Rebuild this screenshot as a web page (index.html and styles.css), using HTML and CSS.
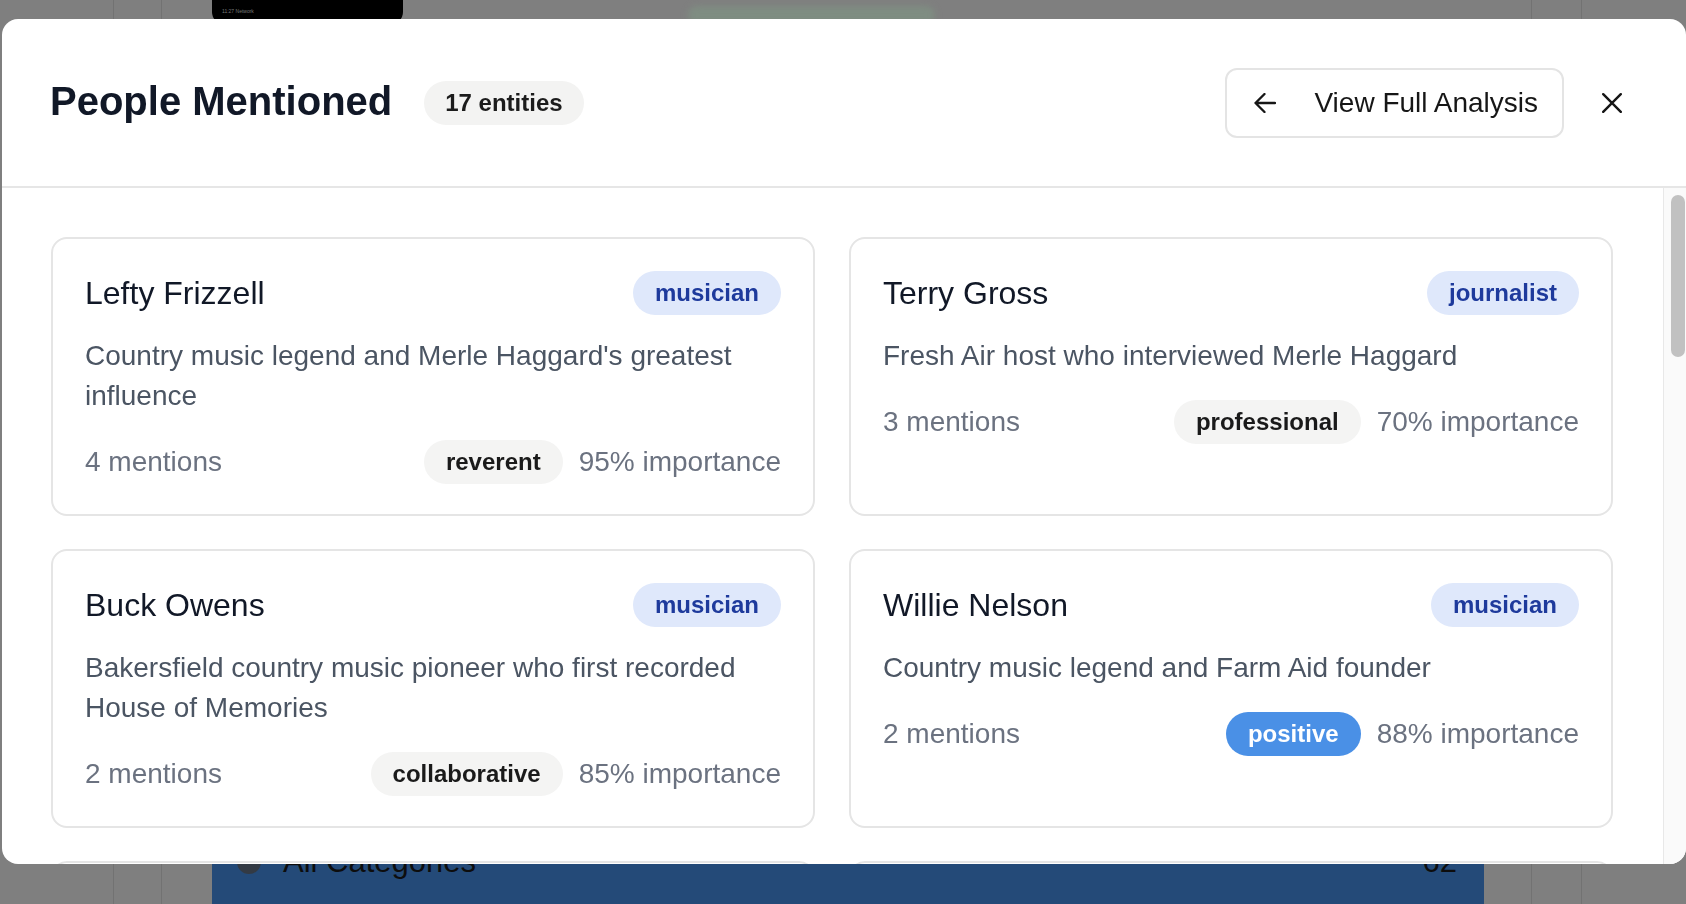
FILE: index.html
```html
<!DOCTYPE html>
<html lang="en">
<head>
<meta charset="utf-8">
<title>People Mentioned</title>
<link rel="stylesheet" href="styles.css">
</head>
<body>
<div class="backdrop">
  <div class="rail rail-a"></div>
  <div class="rail rail-b"></div>
  <div class="stage">
    <div class="stage-top">
      <div class="device-bar"><span class="device-text">11:27 Network</span></div>
      <div class="glow"></div>
    </div>
    <div class="category-panel">
      <span class="cat-dot"></span>
      <span class="cat-label">All Categories</span>
      <span class="cat-count">62</span>
    </div>
  </div>
  <div class="rail rail-c"></div>
  <div class="rail rail-d"></div>
</div>

<section class="modal" role="dialog" aria-label="People Mentioned">
  <header class="modal-head">
    <div class="head-left">
      <h2 class="modal-title">People Mentioned</h2>
      <span class="count-pill">17 entities</span>
    </div>
    <div class="head-right">
      <button class="analysis-btn" type="button">
        <svg class="arrow" width="22" height="20" viewBox="0 0 22 20" aria-hidden="true"><path d="M21 10H1.5M10.5 1 1.5 10l9 9" fill="none" stroke="#161616" stroke-width="2.3" stroke-linecap="round" stroke-linejoin="round"/></svg>
        <span>View Full Analysis</span>
      </button>
      <button class="close-btn" type="button" aria-label="Close">
        <svg width="20" height="20" viewBox="0 0 20 20" aria-hidden="true"><path d="M1.2 1.2 18.8 18.8M18.8 1.2 1.2 18.8" fill="none" stroke="#161616" stroke-width="2.4" stroke-linecap="round"/></svg>
      </button>
    </div>
  </header>

  <div class="modal-body">
    <div class="body-scroll">
      <div class="card-grid">
        <article class="card">
          <div class="card-head"><h3 class="card-name">Lefty Frizzell</h3><span class="role">musician</span></div>
          <p class="card-desc">Country music legend and Merle Haggard's greatest influence</p>
          <div class="card-meta"><span class="mentions">4 mentions</span><div class="meta-right"><span class="tone">reverent</span><span class="importance">95% importance</span></div></div>
        </article>
        <article class="card">
          <div class="card-head"><h3 class="card-name">Terry Gross</h3><span class="role">journalist</span></div>
          <p class="card-desc">Fresh Air host who interviewed Merle Haggard</p>
          <div class="card-meta"><span class="mentions">3 mentions</span><div class="meta-right"><span class="tone">professional</span><span class="importance">70% importance</span></div></div>
        </article>
        <article class="card">
          <div class="card-head"><h3 class="card-name">Buck Owens</h3><span class="role">musician</span></div>
          <p class="card-desc">Bakersfield country music pioneer who first recorded House of Memories</p>
          <div class="card-meta"><span class="mentions">2 mentions</span><div class="meta-right"><span class="tone">collaborative</span><span class="importance">85% importance</span></div></div>
        </article>
        <article class="card">
          <div class="card-head"><h3 class="card-name">Willie Nelson</h3><span class="role">musician</span></div>
          <p class="card-desc">Country music legend and Farm Aid founder</p>
          <div class="card-meta"><span class="mentions">2 mentions</span><div class="meta-right"><span class="tone tone-positive">positive</span><span class="importance">88% importance</span></div></div>
        </article>
        <article class="card">
          <div class="card-head"><h3 class="card-name">Bonnie Owens</h3><span class="role">musician</span></div>
          <p class="card-desc">Singer and Merle Haggard's former wife</p>
          <div class="card-meta"><span class="mentions">2 mentions</span><div class="meta-right"><span class="tone">affectionate</span><span class="importance">75% importance</span></div></div>
        </article>
        <article class="card">
          <div class="card-head"><h3 class="card-name">Johnny Cash</h3><span class="role">musician</span></div>
          <p class="card-desc">Performed at San Quentin while Haggard was an inmate</p>
          <div class="card-meta"><span class="mentions">2 mentions</span><div class="meta-right"><span class="tone">admiring</span><span class="importance">80% importance</span></div></div>
        </article>
      </div>
    </div>
    <div class="scrollbar" aria-hidden="true"><div class="thumb"></div></div>
  </div>
</section>
</body>
</html>
```

FILE: styles.css
```css
* { box-sizing: border-box; }

html, body {
  margin: 0;
  padding: 0;
  height: 904px;
  overflow: hidden;
}

body {
  background: #7f7f7f;
  font-family: "Liberation Sans", Arial, "Helvetica Neue", sans-serif;
  color: #111827;
}

/* ---------- dimmed page behind the dialog ---------- */
.backdrop {
  display: flex;
  height: 904px;
}

.rail { height: 100%; }
.rail-a { width: 114px; border-right: 1px solid #727272; }
.rail-b { width: 48px; border-right: 1px solid #727272; }
.rail-c { width: 51px; border-left: 1px solid #727272; border-right: 1px solid #727272; }
.rail-d { flex: 1; }

.stage {
  width: 1369px;
  display: flex;
  flex-direction: column;
  justify-content: space-between;
}

.stage-top {
  display: flex;
  align-items: flex-start;
  padding-left: 50px;
  gap: 285px;
}

.device-bar {
  width: 191px;
  height: 24px;
  background: #000;
  border-radius: 0 0 12px 12px;
  padding: 8px 0 0 10px;
}

.device-text {
  display: block;
  font-size: 5px;
  color: #777;
  line-height: 6px;
}

.glow {
  width: 247px;
  height: 18px;
  margin-top: 6px;
  background: #7f8d82;
  border-radius: 9px;
  filter: blur(3px);
}

.category-panel {
  margin-left: 50px;
  width: 1272px;
  height: 84px;
  background: #244a78;
  border-radius: 12px 12px 0 0;
  display: flex;
  align-items: center;
  padding: 0 27px 0 25px;
  gap: 22px;
}

.cat-dot {
  width: 24px;
  height: 24px;
  border-radius: 50%;
  background: #333a44;
}

.cat-label {
  flex: 1;
  font-size: 31px;
  color: #0d0d0d;
}

.cat-count {
  font-size: 31px;
  color: #0d0d0d;
}

/* ---------- dialog ---------- */
.modal {
  position: fixed;
  left: 2px;
  top: 19px;
  width: 1684px;
  height: 845px;
  background: #fff;
  border-radius: 16px;
  display: flex;
  flex-direction: column;
  overflow: hidden;
}

.modal-head {
  display: flex;
  align-items: center;
  justify-content: space-between;
  padding: 49px 48px 48px 48px;
  border-bottom: 2px solid #e6e6e6;
  flex: none;
}

.head-left {
  display: flex;
  align-items: center;
  gap: 32px;
}

.modal-title {
  margin: 0 0 4px;
  font-size: 40px;
  font-weight: 700;
  color: #111827;
}

.count-pill {
  height: 44px;
  padding: 0 21px;
  border-radius: 22px;
  background: #f3f3f2;
  display: flex;
  align-items: center;
  font-size: 24px;
  font-weight: 700;
  color: #1c1c1c;
}

.head-right {
  display: flex;
  align-items: center;
  gap: 22px;
}

.analysis-btn {
  height: 70px;
  display: flex;
  align-items: center;
  gap: 38px;
  padding: 0 24px 0 27px;
  background: #fff;
  border: 2px solid #e4e4e4;
  border-radius: 12px;
  font-family: inherit;
  font-size: 28px;
  color: #161616;
}

.arrow { flex: none; }

.close-btn {
  width: 52px;
  height: 52px;
  padding: 0;
  border: 0;
  background: transparent;
  display: flex;
  align-items: center;
  justify-content: center;
}

.modal-body {
  flex: 1;
  min-height: 0;
  display: flex;
}

.body-scroll {
  flex: 1;
  min-width: 0;
  overflow: hidden;
  padding: 49px 50px 48px 49px;
}

.scrollbar {
  flex: none;
  width: 23px;
  background: #fafafa;
  border-left: 1px solid #e8e8e8;
  padding: 7px 1px 0 7px;
}

.thumb {
  height: 162px;
  background: #c1c1c1;
  border-radius: 8px;
}

.card-grid {
  display: grid;
  grid-template-columns: 1fr 1fr;
  gap: 33px 34px;
}

.card {
  border: 2px solid #e5e5e5;
  border-radius: 16px;
  padding: 32px 32px 30px;
  display: flex;
  flex-direction: column;
}

.card-head {
  display: flex;
  align-items: center;
  justify-content: space-between;
  height: 44px;
}

.card-name {
  margin: 0;
  font-size: 32px;
  font-weight: 400;
  color: #111827;
}

.role {
  height: 44px;
  padding: 0 22px;
  border-radius: 22px;
  background: #dfe8fb;
  display: flex;
  align-items: center;
  font-size: 24px;
  font-weight: 700;
  color: #1e3a9c;
}

.card-desc {
  margin: 21px 0 0;
  font-size: 28px;
  line-height: 40px;
  color: #4b5563;
}

.card-meta {
  margin-top: 24px;
  display: flex;
  align-items: center;
  justify-content: space-between;
}

.mentions {
  font-size: 28px;
  color: #6b7280;
}

.meta-right {
  display: flex;
  align-items: center;
  gap: 16px;
}

.tone {
  height: 44px;
  padding: 0 22px;
  border-radius: 22px;
  background: #f4f4f3;
  display: flex;
  align-items: center;
  font-size: 24px;
  font-weight: 700;
  color: #1a1a1a;
}

.tone-positive {
  background: #4a90e6;
  color: #fff;
}

.importance {
  font-size: 28px;
  color: #6b7280;
}
```
